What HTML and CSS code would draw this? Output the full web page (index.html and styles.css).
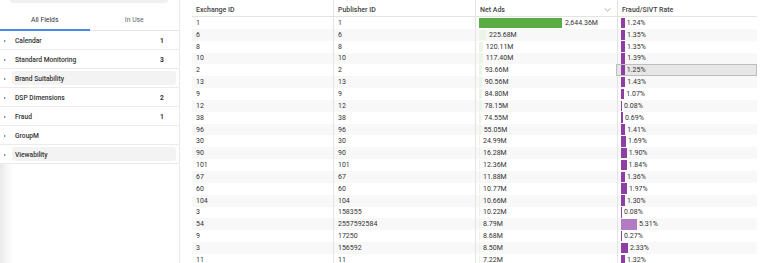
FILE: index.html
```html
<!DOCTYPE html>
<html>
<head>
<meta charset="utf-8">
<link rel="stylesheet" href="styles.css">
</head>
<body>
<div class="app">
  <aside class="sidebar">
    <div class="search"></div>
    <div class="tabs">
      <div class="tab active">All Fields</div>
      <div class="tab">In Use</div>
    </div>
    <ul class="tree">
      <li class="node"><span class="caret"></span><span class="label">Calendar</span><span class="count">1</span></li>
      <li class="node"><span class="caret"></span><span class="label">Standard Monitoring</span><span class="count">3</span></li>
      <li class="node hl"><span class="caret"></span><span class="label">Brand Suitability</span><span class="count"></span></li>
      <li class="node"><span class="caret"></span><span class="label">DSP Dimensions</span><span class="count">2</span></li>
      <li class="node"><span class="caret"></span><span class="label">Fraud</span><span class="count">1</span></li>
      <li class="node"><span class="caret"></span><span class="label">GroupM</span><span class="count"></span></li>
      <li class="node hl"><span class="caret"></span><span class="label">Viewability</span><span class="count"></span></li>
    </ul>
    <div class="filler"></div>
  </aside>
  <main class="main">
    <div class="grid">
      <div class="row head">
        <div class="cell">Exchange ID</div>
        <div class="cell">Publisher ID</div>
        <div class="cell sortable">Net Ads<svg class="chev" viewBox="0 0 8 5" width="7" height="4"><path d="M0.5 0.5 L4 4 L7.5 0.5" fill="none" stroke="#888" stroke-width="0.9"/></svg></div>
        <div class="cell">Fraud/SIVT Rate</div>
      </div>
      <div class="row"><div class="cell">1</div><div class="cell">1</div><div class="cell bar"><span class="gbar strong" style="width:83px"></span><span>2,644.36M</span></div><div class="cell bar"><span class="pbar" style="width:3.7px"></span><span>1.24%</span></div></div>
      <div class="row"><div class="cell">6</div><div class="cell">6</div><div class="cell bar"><span class="gbar" style="width:7.1px"></span><span>225.68M</span></div><div class="cell bar"><span class="pbar" style="width:4px"></span><span>1.35%</span></div></div>
      <div class="row"><div class="cell">8</div><div class="cell">8</div><div class="cell bar"><span class="gbar" style="width:3.8px"></span><span>120.11M</span></div><div class="cell bar"><span class="pbar" style="width:4px"></span><span>1.35%</span></div></div>
      <div class="row"><div class="cell">10</div><div class="cell">10</div><div class="cell bar"><span class="gbar" style="width:3.7px"></span><span>117.40M</span></div><div class="cell bar"><span class="pbar" style="width:4.2px"></span><span>1.39%</span></div></div>
      <div class="row"><div class="cell">2</div><div class="cell">2</div><div class="cell bar"><span class="gbar" style="width:2.9px"></span><span>93.66M</span></div><div class="cell bar selected"><span class="pbar" style="width:3.8px"></span><span>1.25%</span></div></div>
      <div class="row"><div class="cell">13</div><div class="cell">13</div><div class="cell bar"><span class="gbar" style="width:2.8px"></span><span>90.56M</span></div><div class="cell bar"><span class="pbar" style="width:4.3px"></span><span>1.43%</span></div></div>
      <div class="row"><div class="cell">9</div><div class="cell">9</div><div class="cell bar"><span class="gbar" style="width:2.7px"></span><span>84.80M</span></div><div class="cell bar"><span class="pbar" style="width:3.2px"></span><span>1.07%</span></div></div>
      <div class="row"><div class="cell">12</div><div class="cell">12</div><div class="cell bar"><span class="gbar" style="width:2.5px"></span><span>78.15M</span></div><div class="cell bar"><span class="pbar" style="width:1px"></span><span>0.08%</span></div></div>
      <div class="row"><div class="cell">38</div><div class="cell">38</div><div class="cell bar"><span class="gbar" style="width:2.3px"></span><span>74.55M</span></div><div class="cell bar"><span class="pbar" style="width:2.1px"></span><span>0.69%</span></div></div>
      <div class="row"><div class="cell">96</div><div class="cell">96</div><div class="cell bar"><span class="gbar" style="width:1.7px"></span><span>55.05M</span></div><div class="cell bar"><span class="pbar" style="width:4.2px"></span><span>1.41%</span></div></div>
      <div class="row"><div class="cell">30</div><div class="cell">30</div><div class="cell bar"><span class="gbar" style="width:1px"></span><span>24.99M</span></div><div class="cell bar"><span class="pbar" style="width:5.1px"></span><span>1.69%</span></div></div>
      <div class="row"><div class="cell">90</div><div class="cell">90</div><div class="cell bar"><span class="gbar" style="width:1px"></span><span>16.28M</span></div><div class="cell bar"><span class="pbar" style="width:5.7px"></span><span>1.90%</span></div></div>
      <div class="row"><div class="cell">101</div><div class="cell">101</div><div class="cell bar"><span class="gbar" style="width:1px"></span><span>12.36M</span></div><div class="cell bar"><span class="pbar" style="width:5.5px"></span><span>1.84%</span></div></div>
      <div class="row"><div class="cell">67</div><div class="cell">67</div><div class="cell bar"><span class="gbar" style="width:1px"></span><span>11.88M</span></div><div class="cell bar"><span class="pbar" style="width:4.1px"></span><span>1.36%</span></div></div>
      <div class="row"><div class="cell">60</div><div class="cell">60</div><div class="cell bar"><span class="gbar" style="width:1px"></span><span>10.77M</span></div><div class="cell bar"><span class="pbar" style="width:5.9px"></span><span>1.97%</span></div></div>
      <div class="row"><div class="cell">104</div><div class="cell">104</div><div class="cell bar"><span class="gbar" style="width:1px"></span><span>10.66M</span></div><div class="cell bar"><span class="pbar" style="width:3.9px"></span><span>1.30%</span></div></div>
      <div class="row"><div class="cell">3</div><div class="cell">158355</div><div class="cell bar"><span class="gbar" style="width:1px"></span><span>10.22M</span></div><div class="cell bar"><span class="pbar" style="width:1px"></span><span>0.08%</span></div></div>
      <div class="row"><div class="cell">54</div><div class="cell">2557592584</div><div class="cell bar"><span class="gbar" style="width:1px"></span><span>8.79M</span></div><div class="cell bar"><span class="pbar light" style="width:16px"></span><span>5.31%</span></div></div>
      <div class="row"><div class="cell">9</div><div class="cell">17250</div><div class="cell bar"><span class="gbar" style="width:1px"></span><span>8.68M</span></div><div class="cell bar"><span class="pbar" style="width:1px"></span><span>0.27%</span></div></div>
      <div class="row"><div class="cell">3</div><div class="cell">156592</div><div class="cell bar"><span class="gbar" style="width:1px"></span><span>8.50M</span></div><div class="cell bar"><span class="pbar" style="width:7px"></span><span>2.33%</span></div></div>
      <div class="row"><div class="cell">11</div><div class="cell">11</div><div class="cell bar"><span class="gbar" style="width:1px"></span><span>7.22M</span></div><div class="cell bar"><span class="pbar" style="width:4px"></span><span>1.32%</span></div></div>
    </div>
  </main>
</div>
</body>
</html>
```

FILE: styles.css
```css
* { box-sizing: border-box; }
html, body { margin: 0; padding: 0; background: #fff; }
body {
  font-family: Roboto, "Liberation Sans", sans-serif;
  font-size: 7px;
  color: #333;
  overflow: hidden;
  height: 263px;
}
.app { display: flex; height: 263px; }

.sidebar {
  width: 180px;
  flex: none;
  border-right: 1px solid #e8e8e8;
  display: flex;
  flex-direction: column;
}
.search {
  margin: 0 11px 0 10px;
  height: 3px;
  background: #f0f0f0;
  border-radius: 0 0 3px 3px;
}
.tabs {
  display: flex;
  height: 28px;
  border-bottom: 1px solid #e6e6e6;
}
.tab {
  flex: 1;
  display: flex;
  align-items: center;
  justify-content: center;
  padding-top: 7px;
  font-size: 6.8px;
  color: #666;
}
.tab.active {
  color: #333;
  border-bottom: 2px solid #4a86e8;
  margin-bottom: -1px;
}
.tree { list-style: none; margin: 0; padding: 0; }
.node {
  height: 19px;
  border-bottom: 1px solid #ebebeb;
  display: flex;
  align-items: center;
  position: relative;
  font-weight: 500;
  font-size: 6.7px;
  color: #333;
  padding-top: 1px;
}
.node .caret {
  width: 0; height: 0;
  border-left: 2.2px solid #666;
  border-top: 1.5px solid transparent;
  border-bottom: 1.5px solid transparent;
  margin: 0 9px 0 4px;
}
.node .label { flex: 1; position: relative; z-index: 1; }
.node .count { width: 19px; position: relative; z-index: 1; font-weight: 700; }
.node.hl::before {
  content: "";
  position: absolute;
  left: 12px; right: 3px; top: 2px; bottom: 2px;
  background: #f3f3f4;
  border-radius: 3px;
}
.filler {
  flex: 1;
  background: linear-gradient(to right, #e9e9e9 0px, #f7f7f7 7px, #fff 14px);
}

.main { flex: 1; padding-left: 12px; }
.grid { width: 565px; }
.row {
  display: grid;
  grid-template-columns: 141px 142px 142px 140px;
  height: 11.85px;
}
.row:nth-child(odd):not(.head) { background: #f8f8f8; }
.row.head {
  height: 17px;
  border-bottom: 1px solid #e3e3e3;
  font-weight: 500;
  color: #444;
}
.cell {
  display: flex;
  align-items: center;
  padding-left: 4px;
  white-space: nowrap;
  overflow: hidden;
}
.head .cell { padding-top: 3px; }
.cell + .cell { border-left: 1px solid #e4e4e4; }
.cell.sortable { justify-content: space-between; padding-right: 6px; }
.chev { margin-top: 1px; }
.bar { padding-left: 3px; }
.gbar {
  height: 10px;
  background: #eaf4e7;
  margin-right: 3px;
  flex: none;
}
.gbar.strong { background: #5aac45; }
.pbar {
  height: 10.5px;
  background: #8e3fa3;
  margin-right: 2px;
  flex: none;
}
.pbar.light { background: #b27cc4; }
.selected {
  background: #e6e6e6;
  outline: 1px solid #bdbdbd;
  outline-offset: -1px;
  margin-left: -1px;
  padding-left: 4px;
}
```
